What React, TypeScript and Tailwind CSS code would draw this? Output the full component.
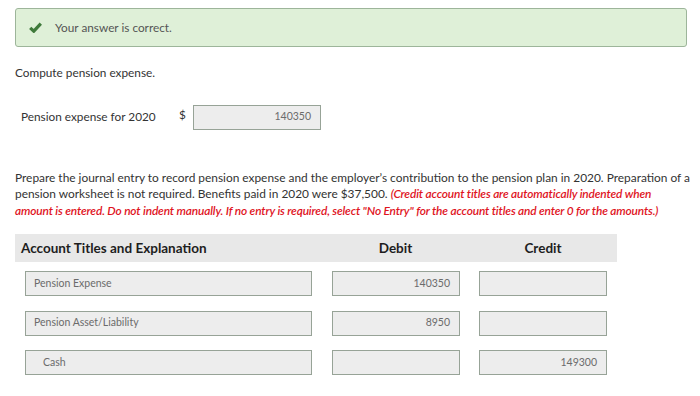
const rows = [
  { account: 'Pension Expense', debit: '140350', credit: '', indent: false },
  { account: 'Pension Asset/Liability', debit: '8950', credit: '', indent: false },
  { account: 'Cash', debit: '', credit: '149300', indent: true },
];

function Field({ value, right, indent, className }: { value: string; right?: boolean; indent?: boolean; className: string }) {
  return (
    <div
      className={`h-[25px] border border-[#97a397] bg-[#ededed] flex items-center text-[10.5px] text-[#6b6b6b] ${
        right ? 'justify-end pr-[9px]' : indent ? 'pl-[17px]' : 'pl-[8px]'
      } ${className}`}
    >
      {value}
    </div>
  );
}

export default function App() {
  return (
    <div className="w-[700px] h-[396px] bg-white font-['Lato','Open_Sans',sans-serif] text-[#333] pt-[8px] pl-[15px] overflow-hidden">
      {/* result banner */}
      <div className="w-[672px] h-[39px] border border-[#9db59a] rounded-[3px] bg-[#dff0d8] flex items-center pl-[13px]">
        <svg width="13" height="11" viewBox="0 0 13 11" className="mr-[13px]">
          <path d="M1.2 5.8 L4.8 9.2 L11.8 1.6" fill="none" stroke="#3f7a3b" strokeWidth="3.2" strokeLinejoin="miter" />
        </svg>
        <span className="text-[11.8px] text-[#555]">Your answer is correct.</span>
      </div>

      <p className="mt-[17px] text-[11.8px]">Compute pension expense.</p>

      {/* pension expense input */}
      <div className="mt-[23px] flex items-center">
        <span className="ml-[6px] text-[11.8px] w-[158px]">Pension expense for 2020</span>
        <span className="text-[11.8px] -mt-[4px] w-[14px]">$</span>
        <Field value="140350" right className="w-[128px] h-[24px]" />
      </div>

      <p className="mt-[40px] w-[685px] text-[11.9px] leading-[16.5px]">
        Prepare the journal entry to record pension expense and the employer’s contribution to the pension plan in 2020. Preparation of a
        <br />
        pension worksheet is not required. Benefits paid in 2020 were $37,500.{' '}
        <span className="text-[#e0141e] italic font-semibold tracking-[-0.15px]">
          (Credit account titles are automatically indented when
          <br />
          amount is entered. Do not indent manually. If no entry is required, select "No Entry" for the account titles and enter 0 for the amounts.)
        </span>
      </p>

      {/* journal table */}
      <div className="mt-[15px] w-[602px]">
        <div className="h-[28px] bg-[#e8e8e8] grid grid-cols-[307px_147px_148px] items-center text-[13.5px] font-bold text-[#1e1e1e]">
          <span className="pl-[6px]">Account Titles and Explanation</span>
          <span className="text-center">Debit</span>
          <span className="text-center">Credit</span>
        </div>
        <div className="flex flex-col gap-[14.5px] pt-[9px]">
          {rows.map((r) => (
            <div key={r.account} className="grid grid-cols-[307px_147px_148px]">
              <div className="pl-[10px]">
                <Field value={r.account} indent={r.indent} className="w-[287px]" />
              </div>
              <div className="pl-[10px]">
                <Field value={r.debit} right className="w-[128px]" />
              </div>
              <div className="pl-[10px]">
                <Field value={r.credit} right className="w-[128px]" />
              </div>
            </div>
          ))}
        </div>
      </div>
    </div>
  );
}
